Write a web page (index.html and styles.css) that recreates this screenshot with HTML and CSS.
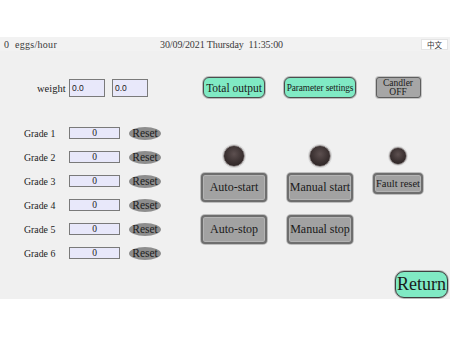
FILE: index.html
```html
<!DOCTYPE html>
<html>
<head>
<meta charset="utf-8">
<link rel="stylesheet" href="styles.css">
</head>
<body>
<div class="panel">
  <div class="header">
    <span class="eggs">0&nbsp; eggs/hour</span>
    <span class="date">30/09/2021 Thursday&nbsp; 11:35:00</span>
    <span class="lang">中文</span>
  </div>
  <div class="main">
    <div class="left">
      <div class="weight-row">
        <span class="weight-label">weight</span>
        <span class="wbox">0.0</span>
        <span class="wbox">0.0</span>
      </div>
      <div class="grades">
        <div class="grade"><span class="glabel">Grade 1</span><span class="gbox">0</span><span class="reset">Reset</span></div>
        <div class="grade"><span class="glabel">Grade 2</span><span class="gbox">0</span><span class="reset">Reset</span></div>
        <div class="grade"><span class="glabel">Grade 3</span><span class="gbox">0</span><span class="reset">Reset</span></div>
        <div class="grade"><span class="glabel">Grade 4</span><span class="gbox">0</span><span class="reset">Reset</span></div>
        <div class="grade"><span class="glabel">Grade 5</span><span class="gbox">0</span><span class="reset">Reset</span></div>
        <div class="grade"><span class="glabel">Grade 6</span><span class="gbox">0</span><span class="reset">Reset</span></div>
      </div>
    </div>
    <div class="controls">
      <div class="btn teal total">Total output</div>
      <div class="btn teal param">Parameter settings</div>
      <div class="btn candler">Candler<br>OFF</div>

      <div class="lamp"></div>
      <div class="lamp"></div>
      <div class="lamp small"></div>

      <div class="btn grey big start">Auto-start</div>
      <div class="btn grey big start">Manual start</div>
      <div class="btn grey fault">Fault reset</div>

      <div class="btn grey big stop">Auto-stop</div>
      <div class="btn grey big stop">Manual stop</div>
    </div>
  </div>
  <div class="footer">
    <div class="btn teal return">Return</div>
  </div>
</div>
</body>
</html>
```

FILE: styles.css
```css
html, body {
  margin: 0;
  padding: 0;
  background: #ffffff;
}

body {
  width: 450px;
  height: 338px;
  overflow: hidden;
  font-family: "Liberation Serif", "Times New Roman", serif;
  color: #222;
}

.panel {
  margin-top: 37px;
  height: 262px;
  background: #f0f0f0;
  display: flex;
  flex-direction: column;
}

.header {
  height: 14px;
  display: flex;
  align-items: center;
  background: #f2f2f2;
  font-size: 10px;
  color: #3a3a3a;
}

.eggs {
  width: 156px;
  padding-left: 4px;
  letter-spacing: 0.3px;
}

.date {
  letter-spacing: -0.1px;
}

.lang {
  margin-left: auto;
  margin-right: 2px;
  width: 27px;
  height: 11px;
  background: #fff;
  border: 1px solid #e4e4e4;
  box-sizing: border-box;
  font-family: "Noto Sans CJK SC", sans-serif;
  font-size: 7.5px;
  line-height: 9px;
  text-align: center;
  color: #333;
}

.main {
  display: flex;
}

.left {
  width: 196px;
  padding-top: 28px;
  box-sizing: border-box;
}

.weight-row {
  display: flex;
  align-items: center;
  padding-left: 37px;
  height: 18px;
}

.weight-label {
  font-size: 10.5px;
  width: 32px;
}

.wbox {
  width: 36px;
  height: 18px;
  box-sizing: border-box;
  background: #e8e8fa;
  border: 1px solid #7a7a7a;
  font-family: "Liberation Sans", Arial, sans-serif;
  font-size: 8.5px;
  line-height: 16px;
  padding-left: 2px;
  margin-right: 7px;
}

.grades {
  margin-top: 24px;
  padding-left: 24px;
}

.grade {
  display: flex;
  align-items: center;
  height: 24px;
}

.glabel {
  width: 45px;
  font-size: 9.8px;
}

.gbox {
  width: 51px;
  height: 12px;
  box-sizing: border-box;
  background: #e8e8fa;
  border: 1px solid #7a7a7a;
  font-size: 9.5px;
  line-height: 10px;
  text-align: center;
}

.reset {
  margin-left: 9px;
  width: 32px;
  height: 13px;
  border-radius: 50%;
  background: #8d8d8d;
  font-size: 11.5px;
  line-height: 13px;
  text-align: center;
  color: #1e1e1e;
  white-space: nowrap;
  display: flex;
  justify-content: center;
}

.controls {
  padding-top: 26px;
  display: grid;
  grid-template-columns: 76px 76px 60px;
  column-gap: 10px;
  justify-items: center;
  align-content: start;
}

.btn {
  box-sizing: border-box;
  display: flex;
  align-items: center;
  justify-content: center;
  text-align: center;
  white-space: nowrap;
  color: #1a1a1a;
}

.teal {
  background: #80eac4;
  border: 1.5px solid #4d4d4d;
  border-radius: 6px;
  box-shadow: 0 0 0 1px #b9b9b9;
}

.total {
  width: 62px;
  height: 21px;
  font-size: 11.5px;
}

.param {
  width: 72px;
  height: 21px;
  font-size: 9.3px;
  letter-spacing: -0.1px;
}

.candler {
  width: 45px;
  height: 21px;
  background: #a6a6a6;
  border: 1.5px solid #5e5e5e;
  border-radius: 3px;
  box-shadow: 0 0 0 1px #c4c4c4;
  font-size: 9.5px;
  line-height: 9px;
}

.lamp {
  margin-top: 47px;
  width: 22px;
  height: 22px;
  box-sizing: border-box;
  border-radius: 50%;
  border: 1.5px solid #9b9595;
  box-shadow: 0 0 0 1px #d8d8d8;
  background: radial-gradient(circle at 50% 40%, #5d5050 0%, #3b3131 55%, #241c1c 100%);
}

.lamp.small {
  width: 18px;
  height: 18px;
  align-self: center;
}

.grey {
  background: #a2a2a2;
  border: 2px solid #6e6e6e;
  border-radius: 4px;
  box-shadow: 0 0 0 1px #bdbdbd, inset 0 0 0 1px #b4b4b4;
}

.big {
  width: 66px;
  height: 29px;
  font-size: 12px;
}

.start {
  margin-top: 6px;
}

.stop {
  margin-top: 13px;
}

.fault {
  margin-top: 6px;
  align-self: start;
  width: 50px;
  height: 21px;
  font-size: 10.5px;
}

.footer {
  margin-top: auto;
  display: flex;
  justify-content: flex-end;
  padding-right: 2px;
  padding-bottom: 1px;
}

.return {
  width: 53px;
  height: 27px;
  font-size: 18px;
  border-radius: 9px;
  border: 1.5px solid #3f3f3f;
}
```
